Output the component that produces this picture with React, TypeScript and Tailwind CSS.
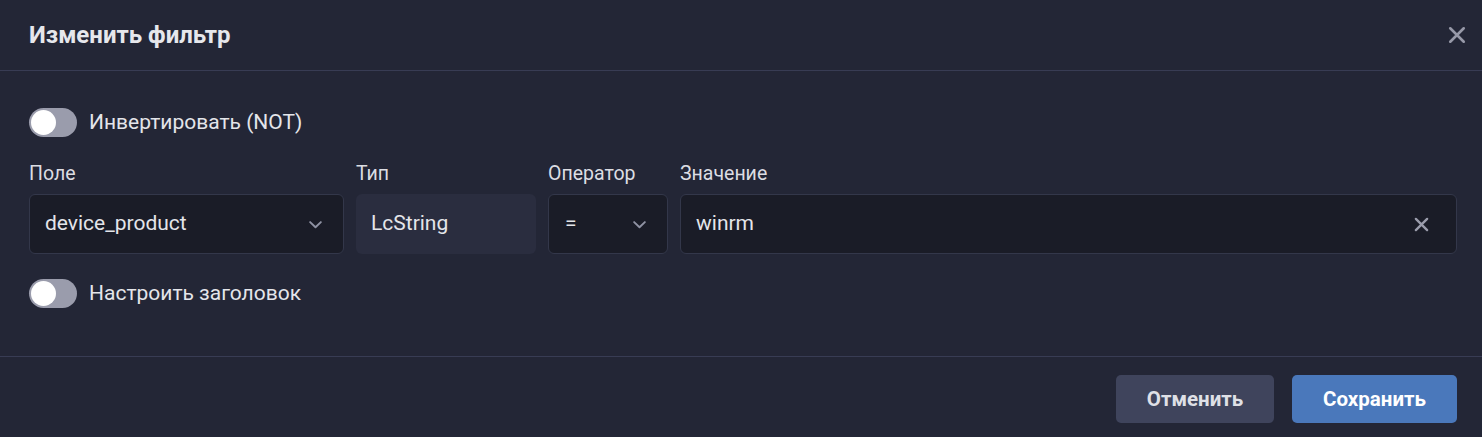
import React from "react";

function Toggle() {
  return (
    <div className="w-[48px] h-[29px] rounded-full bg-[#9a9cac] flex items-center px-[2px] shrink-0">
      <div className="w-[25px] h-[25px] rounded-full bg-white" />
    </div>
  );
}

function Chevron() {
  return (
    <svg width="15" height="15" viewBox="0 0 14 14" fill="none" stroke="#8f92a3" strokeWidth="1.8" strokeLinecap="round" strokeLinejoin="round">
      <path d="M2 4.8 L7 9.6 L12 4.8" />
    </svg>
  );
}

function XIcon({ size, color, width }: { size: number; color: string; width: number }) {
  return (
    <svg width={size} height={size} viewBox="0 0 16 16" fill="none" stroke={color} strokeWidth={width} strokeLinecap="round">
      <path d="M2 2 L14 14 M14 2 L2 14" />
    </svg>
  );
}

export default function App() {
  return (
    <div
      className="w-[1482px] h-[437px] bg-[#232636] text-[#e4e5ea] flex flex-col"
      style={{ fontFamily: "Roboto, 'Noto Sans', sans-serif" }}
    >
      <div className="h-[71px] border-b border-[#383c54] flex items-center justify-between pl-[29px] pr-[16px] shrink-0">
        <div className="text-[24px] font-bold text-[#e6e7ec]">Изменить фильтр</div>
        <XIcon size={18} color="#9799a8" width={2.3} />
      </div>

      <div className="flex-1 flex flex-col pl-[29px] pr-[25px] pt-[37px]">
        <div className="flex items-center gap-[12px] h-[29px]">
          <Toggle />
          <span className="text-[21px] text-[#e4e5ea]">Инвертировать (NOT)</span>
        </div>

        <div className="flex gap-[12px] mt-[23px]">
          <div className="flex flex-col w-[315px]">
            <div className="text-[19.5px] text-[#dcdde3] h-[28px] leading-[28px] mb-[6px]">Поле</div>
            <div className="h-[60px] rounded-[6px] bg-[#1a1c27] border border-[#33374a] flex items-center justify-between pl-[15px] pr-[20px]">
              <span className="text-[21px]">device_product</span>
              <Chevron />
            </div>
          </div>
          <div className="flex flex-col w-[180px]">
            <div className="text-[19.5px] text-[#dcdde3] h-[28px] leading-[28px] mb-[6px]">Тип</div>
            <div className="h-[60px] rounded-[6px] bg-[#2a2d3f] flex items-center pl-[15px]">
              <span className="text-[21px]">LcString</span>
            </div>
          </div>
          <div className="flex flex-col w-[120px]">
            <div className="text-[19.5px] text-[#dcdde3] h-[28px] leading-[28px] mb-[6px]">Оператор</div>
            <div className="h-[60px] rounded-[6px] bg-[#1a1c27] border border-[#33374a] flex items-center justify-between pl-[16px] pr-[20px]">
              <span className="text-[21px]">=</span>
              <Chevron />
            </div>
          </div>
          <div className="flex flex-col flex-1">
            <div className="text-[19.5px] text-[#dcdde3] h-[28px] leading-[28px] mb-[6px]">Значение</div>
            <div className="h-[60px] rounded-[6px] bg-[#1a1c27] border border-[#33374a] flex items-center justify-between pl-[15px] pr-[27px]">
              <span className="text-[21px]">winrm</span>
              <XIcon size={15} color="#9a9cab" width={2.5} />
            </div>
          </div>
        </div>

        <div className="flex items-center gap-[12px] h-[29px] mt-[25px]">
          <Toggle />
          <span className="text-[21px] text-[#e4e5ea]">Настроить заголовок</span>
        </div>
      </div>

      <div className="h-[81px] border-t border-[#383c54] flex items-start justify-end gap-[18px] pr-[25px] pt-[18px] shrink-0">
        <button className="w-[158px] h-[48px] rounded-[5px] bg-[#3f445c] text-[20.5px] font-bold text-[#dfe0e6]">Отменить</button>
        <button className="w-[165px] h-[48px] rounded-[5px] bg-[#4a78bb] text-[20.5px] font-bold text-white">Сохранить</button>
      </div>
    </div>
  );
}
